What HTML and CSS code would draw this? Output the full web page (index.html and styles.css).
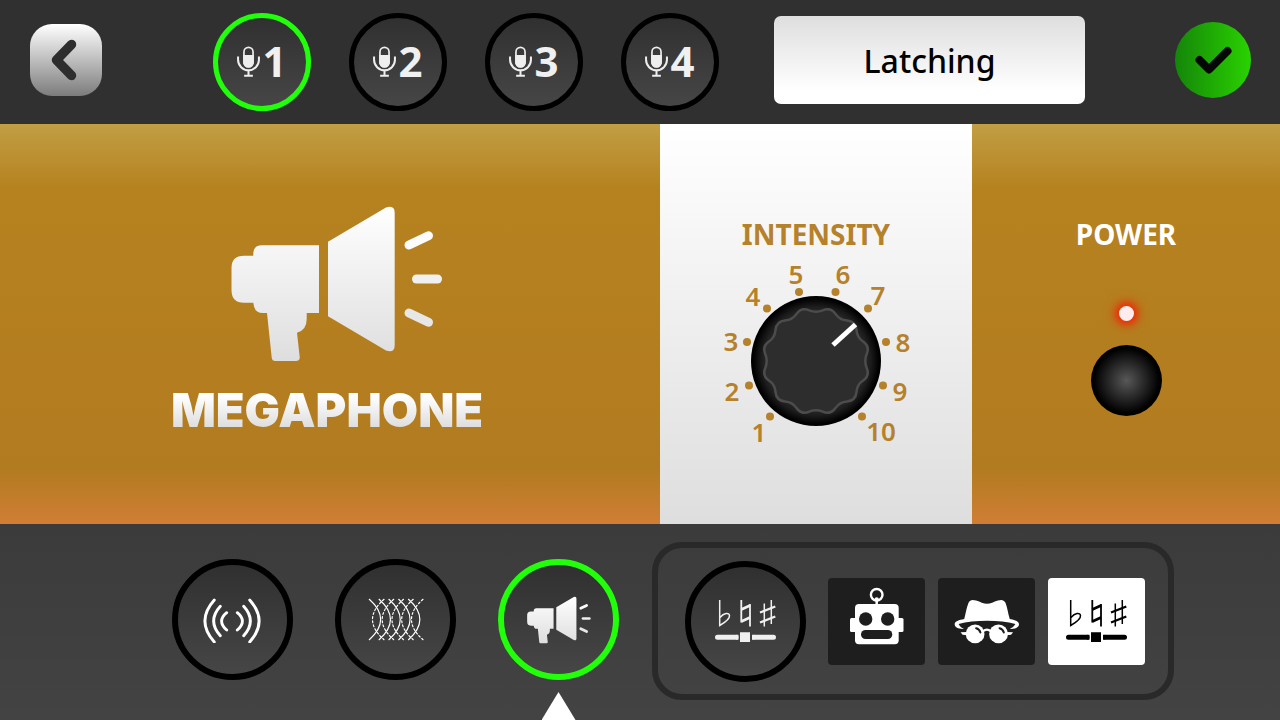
FILE: index.html
```html
<!DOCTYPE html>
<html lang="en">
<head>
<meta charset="utf-8">
<meta name="viewport" content="width=device-width, initial-scale=1">
<title>Megaphone</title>
<link rel="stylesheet" href="styles.css">
</head>
<body>
<svg class="defs" aria-hidden="true">
  <defs>
    <linearGradient id="silver-cone" gradientUnits="userSpaceOnUse" x1="0" y1="206" x2="0" y2="361">
      <stop offset="0" stop-color="#ffffff"/><stop offset="1" stop-color="#dedede"/>
    </linearGradient>
    <radialGradient id="knob-rim">
      <stop offset="0.7" stop-color="#303030"/><stop offset="0.84" stop-color="#1c1c1c"/><stop offset="0.97" stop-color="#000000"/>
    </radialGradient>
    <symbol id="mic" viewBox="722 140 68 92">
      <g fill="none" stroke="#eeeeee">
        <rect x="742.500" y="144" width="27" height="58" rx="13.500" stroke-width="5"/>
        <path d="M725 171v10a31 31 0 0 0 62 0v-10" stroke-width="6"/>
        <path d="M756 212v15M743 228h26" stroke-width="6"/>
      </g>
      <path fill="#eeeeee" d="M740 167h32v21a16 16 0 0 1-32 0z"/>
    </symbol>
    <symbol id="horn" viewBox="231 206 212 156">
      <g fill="url(#silver-cone)">
        <path d="M262 245.300H319V313H306.700V319Q306.700 330 297 332.700L299.700 357Q300 361 296 361H275.500Q272 361 271.700 357.500L267 313H263Q254 313 253.300 302.700H244Q231.500 302.700 231.500 290V268Q231.500 255.700 244 255.700H253.300V254Q253.300 245.300 262 245.300Z"/>
        <path d="M328 241.700L386 207.500Q394.700 204.500 394.700 213V345Q394.700 353.500 386 350.500L328 316.300Z"/>
      </g>
      <g fill="none" stroke-width="9" stroke-linecap="round">
        <path stroke="#fcfcfc" d="M409 245L428.500 235.700"/>
        <path stroke="#f0f0f0" d="M416.500 279H437.500"/>
        <path stroke="#e7e7e7" d="M409 313L428.500 322.300"/>
      </g>
    </symbol>
    <symbol id="accidentals" viewBox="714 599 63 44">
      <g fill="none" stroke="currentColor">
        <path stroke-width="1.500" d="M719.700 600V625.500Q730 619.500 729.500 615.500C729 612.500 724 612.500 720 617.500"/>
        <path stroke-width="1.800" d="M741.300 600V622.500M750 604V626.500"/>
        <path stroke-width="2.800" d="M741.300 609.500L750 605.500M741.300 621.500L750 617.500"/>
        <path stroke-width="1.500" d="M764.300 603.500V626.500M771.300 600V624"/>
        <path stroke-width="2.300" d="M760 612.500L775.300 606.500M760 622.500L775.300 616.500"/>
        <path stroke-width="5" stroke-linecap="round" d="M717.500 637.300H736M754.500 637.300H773.500"/>
      </g>
      <path fill="currentColor" d="M736 634.800h2.500v5h-2.500zM752 634.800h2.500v5h-2.500zM740 632.300h10v9.700h-10z"/>
    </symbol>
  </defs>
</svg>

<header class="topbar">
  <button class="back" type="button" aria-label="Back">
    <svg viewBox="0 0 72 72" aria-hidden="true"><path d="M41.500 20.500L26.500 36L41.500 51.500" fill="none" stroke="#2e2e2e" stroke-width="9.500" stroke-linecap="round" stroke-linejoin="round"/></svg>
  </button>
  <nav class="mics" aria-label="Microphones">
    <button class="round mic active" type="button"><svg aria-hidden="true"><use href="#mic"/></svg>1</button>
    <button class="round mic" type="button"><svg aria-hidden="true"><use href="#mic"/></svg>2</button>
    <button class="round mic" type="button"><svg aria-hidden="true"><use href="#mic"/></svg>3</button>
    <button class="round mic" type="button"><svg aria-hidden="true"><use href="#mic"/></svg>4</button>
  </nav>
  <button class="mode" type="button">Latching</button>
  <button class="confirm" type="button" aria-label="Confirm">
    <svg viewBox="1175 22 76 76" aria-hidden="true"><path d="M1199.500 60L1209 69.500L1227.500 51" fill="none" stroke="#060806" stroke-width="8" stroke-linecap="round" stroke-linejoin="round"/></svg>
  </button>
</header>

<main class="pedal">
  <section class="effect">
    <svg class="effect-icon" aria-hidden="true"><use href="#horn"/></svg>
    <h1 class="effect-name">MEGAPHONE</h1>
  </section>

  <section class="intensity">
    <label class="caption" for="intensity">INTENSITY</label>
    <div class="dial">
      <svg class="dial-face" viewBox="700 253 232 200" aria-hidden="true">
        <g fill="#b5812a">
          <circle cx="770" cy="416.500" r="4"/><circle cx="749" cy="385.500" r="4"/><circle cx="747" cy="342" r="4"/><circle cx="767" cy="308.500" r="4"/><circle cx="799" cy="292" r="4"/>
          <circle cx="835.500" cy="292" r="4"/><circle cx="868" cy="308.500" r="4"/><circle cx="886" cy="342" r="4"/><circle cx="883" cy="385.500" r="4"/><circle cx="862" cy="416.500" r="4"/>
        </g>
        <g class="scale">
          <text x="759" y="442">1</text><text x="732" y="401">2</text><text x="731" y="351">3</text><text x="753" y="306">4</text><text x="796" y="284">5</text>
          <text x="843" y="284">6</text><text x="878" y="305">7</text><text x="903" y="352">8</text><text x="900" y="401">9</text><text x="881" y="441">10</text>
        </g>
        <g transform="translate(816 361)">
          <circle r="65" fill="url(#knob-rim)"/>
          <path fill="#2d2d2d" stroke="#4c4c4c" stroke-width="2.500" d="M-6.700 -50.600Q0 -48 6.700 -50.600Q14.500 -54.100 19.500 -47.100Q23.500 -41 31 -40.500Q39.600 -39.600 40.500 -31Q41 -23.500 47.100 -19.500Q54.100 -14.500 50.600 -6.700Q48 0 50.600 6.700Q54.100 14.500 47.100 19.500Q41 23.500 40.500 31Q39.600 39.600 31 40.500Q23.500 41 19.500 47.100Q14.500 54.100 6.700 50.600Q0 48 -6.700 50.600Q-14.500 54.100 -19.500 47.100Q-23.500 41 -31 40.500Q-39.600 39.600 -40.500 31Q-41 23.500 -47.100 19.500Q-54.100 14.500 -50.600 6.700Q-48 0 -50.600 -6.700Q-54.100 -14.500 -47.100 -19.500Q-41 -23.500 -40.500 -31Q-39.600 -39.600 -31 -40.500Q-23.500 -41 -19.500 -47.100Q-14.500 -54.100 -6.700 -50.600Z"/>
          <path stroke="#ffffff" stroke-width="5" d="M17 -16L39.500 -36.500"/>
        </g>
      </svg>
      <input class="dial-input" id="intensity" type="range" min="1" max="10" step="0.1" value="7">
    </div>
  </section>

  <section class="power">
    <h2 class="caption">POWER</h2>
    <span class="led"></span>
    <button class="stomp" type="button" aria-label="Power"></button>
  </section>
</main>

<footer class="effects">
  <div class="styles">
    <button class="round style" type="button" aria-label="Echo">
      <svg width="60" height="46" viewBox="203 597 60 46" fill="none" stroke="#ffffff" stroke-width="2.900" stroke-linecap="round" aria-hidden="true">
        <path d="M214.300 600Q195.500 621 214.300 642M220.300 606.300Q207 621 220.300 635.700M226.700 612.700Q216.500 621 226.700 630"/>
        <path d="M249.700 600Q268.500 621 249.700 642M243.700 606.300Q257 621 243.700 635.700M237.300 612.700Q247.500 621 237.300 630"/>
      </svg>
    </button>
    <button class="round style" type="button" aria-label="Chorus">
      <svg width="58" height="44" viewBox="367 598 58 44" fill="none" stroke="#ffffff" stroke-width="1.200" stroke-linecap="round" aria-hidden="true">
        <path d="M369.300 599.300Q392 619.500 369.300 639.700M379.100 599.300Q401.800 619.500 379.100 639.700M388.900 599.300Q411.600 619.500 388.900 639.700M398.700 599.300Q421.400 619.500 398.700 639.700M408.500 599.300Q431.200 619.500 408.500 639.700"/>
        <path stroke-dasharray="2 2.200" d="M384 599.300Q361 619.500 384 639.700M393.700 599.300Q370.700 619.500 393.700 639.700M403.500 599.300Q380.500 619.500 403.500 639.700M413.200 599.300Q390.200 619.500 413.200 639.700M423 599.300Q400 619.500 423 639.700"/>
      </svg>
    </button>
    <button class="round style active" type="button" aria-label="Megaphone">
      <svg width="64" height="48" aria-hidden="true"><use href="#horn"/></svg>
    </button>
  </div>

  <div class="pitch">
    <button class="round style" type="button" aria-label="Pitch">
      <svg width="63" height="44" aria-hidden="true"><use href="#accidentals"/></svg>
    </button>
    <div class="tiles">
      <button class="tile" type="button" aria-label="Robot">
        <svg width="54" height="68" viewBox="850 587 54 68" aria-hidden="true">
          <circle cx="876.700" cy="594.800" r="5.800" fill="none" stroke="#fff" stroke-width="2.400"/>
          <path d="M876.700 599V605" stroke="#fff" stroke-width="2.500"/><circle cx="876.700" cy="599.500" r="2.200" fill="#fff"/>
          <rect x="850" y="618" width="53.500" height="14" rx="1.500" fill="#fff"/><rect x="855" y="604" width="43.700" height="40.300" rx="4" fill="#fff"/>
          <g fill="#1e1e1e"><circle cx="865.700" cy="619" r="6.700"/><circle cx="887.700" cy="619" r="6.700"/><rect x="861" y="630" width="31.300" height="9" rx="4.500"/></g>
        </svg>
      </button>
      <button class="tile" type="button" aria-label="Incognito">
        <svg width="66" height="45" viewBox="130 190 200 135" aria-hidden="true">
          <path fill="#fff" d="M161 250C166 232 168 215 174 201C179 190 187 191 197 194C210 198 219 204 230 204C241 204 250 198 263 194C273 191 280 190 286 201C292 215 293 232 299 250C315 253 327 257 327 266C327 276 313 281 299 280C305 277 313 272 316 265C292 258 262 255 230 255C198 255 168 258 144 265C147 272 153 277 160 280C145 281 132 276 132 266C132 257 145 253 161 250Z"/>
          <g fill="#fff"><circle cx="194" cy="295" r="28.500"/><circle cx="265" cy="295" r="28.500"/><path d="M150 290L170 289V299L156 298ZM309 290L289 289V299L303 298Z"/></g>
          <path fill="none" stroke="#fff" stroke-width="6" d="M217 288Q230 276 242 288"/>
          <path fill="none" stroke="#1e1e1e" stroke-width="6" stroke-linecap="round" d="M197 278Q207 280 210 291M268 278Q278 280 281 291"/>
        </svg>
      </button>
      <button class="tile selected" type="button" aria-label="Pitch shift">
        <svg width="63" height="44" aria-hidden="true"><use href="#accidentals"/></svg>
      </button>
    </div>
  </div>
</footer>
</body>
</html>
```
FILE: styles.css
```css
* {
  box-sizing: border-box;
}

body {
  display: flex;
  flex-direction: column;
  min-height: 100vh;
  margin: 0;
  overflow-x: hidden;
  background: #404040;
  font-family: "Noto Sans", sans-serif;
}

button {
  padding: 0;
  border: 0;
  font: inherit;
  cursor: pointer;
}

svg {
  display: block;
}

.defs {
  position: absolute;
  width: 0;
  height: 0;
}

.topbar {
  display: flex;
  align-items: center;
  height: 124px;
  padding: 0 29px 4px 30px;
  background: #303030;
}

.back {
  flex: none;
  width: 72px;
  height: 72px;
  border-radius: 22px;
  background: linear-gradient(#ffffff, #7c7c7c);
}

.mics {
  display: flex;
  gap: 38px;
  margin: 4px 55px 0 111px;
}

.round {
  display: flex;
  flex: none;
  align-items: center;
  justify-content: center;
  border: 5px solid #000000;
  border-radius: 50%;
  background: linear-gradient(#303030, #464646);
  color: #f0f0f0;
}

.round.active {
  border-color: #22ff0a;
}

.mic {
  gap: 2px;
  width: 98px;
  height: 98px;
  padding-bottom: 2px;
  font-size: 42px;
  font-weight: 700;
  line-height: 56px;
}

.mic svg {
  width: 23px;
  height: 31px;
}

.mode {
  flex: 0 1 311px;
  height: 88px;
  border-radius: 7px;
  background: linear-gradient(#dedede, #ffffff 85%);
  color: #000000;
  font-size: 32px;
  font-weight: 500;
}

.confirm {
  flex: none;
  width: 76px;
  height: 76px;
  margin-left: auto;
  border-radius: 50%;
  background: linear-gradient(90deg, #148609, #2ad200);
}

.pedal {
  display: grid;
  grid-template-columns: 660fr 312fr 308fr;
  min-height: 400px;
  background: linear-gradient(#c19e44, #b6821f 16%, #b27b20 86%, #d07e34);
}

.effect {
  display: flex;
  flex-direction: column;
  align-items: center;
  padding: 82px 6px 0 0;
}

.effect-icon {
  width: 212px;
  height: 156px;
  margin-left: 20px;
}

.effect-name {
  margin: 20px 0 0;
  background: linear-gradient(#ffffff 25%, #dedede 80%);
  background-clip: text;
  color: transparent;
  font-family: Inter, sans-serif;
  font-size: 47px;
  font-weight: 900;
  line-height: 56px;
}

.intensity,
.power {
  display: flex;
  flex-direction: column;
  align-items: center;
  padding-top: 91px;
}

.intensity {
  background: linear-gradient(#ffffff, #dedede);
  color: #b5812a;
}

.caption {
  margin: 0;
  font-size: 28px;
  font-weight: 700;
  line-height: 38px;
}

.dial {
  position: relative;
  width: 232px;
  height: 200px;
}

.dial-face {
  width: 100%;
  height: 100%;
}

.scale {
  fill: #b5812a;
  font-size: 26px;
  font-weight: 600;
  text-anchor: middle;
}

.dial-input {
  position: absolute;
  inset: 44px 50px 26px;
  width: 132px;
  height: 130px;
  margin: 0;
  opacity: 0;
  cursor: grab;
}

.power {
  color: #ffffff;
}

.led {
  width: 15px;
  height: 15px;
  margin-top: 53px;
  border-radius: 50%;
  background: #ffecec;
  box-shadow: 0 0 6px 3px #e8320c, 0 0 12px 4px #d84a10;
}

.stomp {
  width: 71px;
  height: 71px;
  margin-top: 24px;
  border-radius: 50%;
  background: radial-gradient(closest-side, #585858, #000000 92%);
}

.effects {
  display: flex;
  flex: 1;
  align-items: flex-start;
  gap: 33px;
  min-height: 196px;
  padding: 18px 106px 0 172px;
  background: linear-gradient(#3b3b3b, #434343);
}

.styles {
  display: flex;
  gap: 42px;
  padding-top: 17px;
}

.style {
  position: relative;
  width: 121px;
  height: 121px;
  border-width: 6px;
}

.styles .style.active::after {
  position: absolute;
  top: 127px;
  width: 34px;
  height: 28px;
  background: #ffffff;
  clip-path: polygon(50% 0, 100% 100%, 0 100%);
  content: "";
}

.pitch {
  display: flex;
  flex: 1;
  align-items: center;
  justify-content: space-between;
  height: 158px;
  padding: 0 23px 0 27px;
  border: 6px solid #292929;
  border-radius: 30px;
}

.tiles {
  display: flex;
  gap: 13px;
}

.tile {
  display: flex;
  align-items: center;
  justify-content: center;
  width: 97px;
  height: 87px;
  border-radius: 4px;
  background: #1e1e1e;
  color: #000000;
}

.tile.selected {
  background: #ffffff;
}
```
